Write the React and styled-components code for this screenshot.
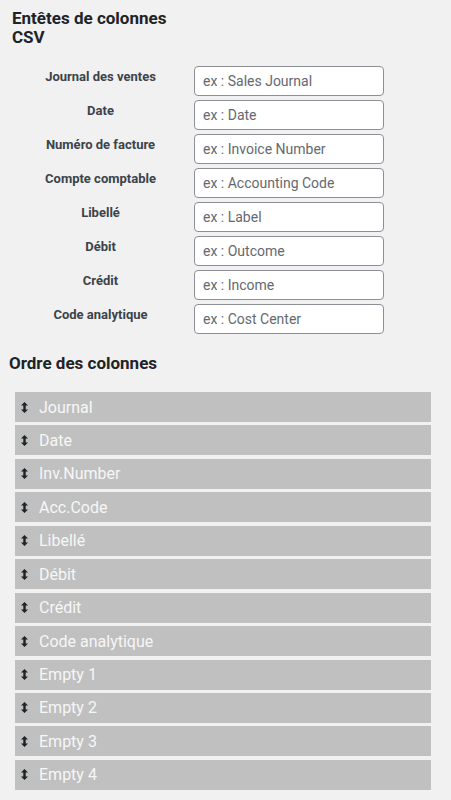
import React from "react";
import styled, { createGlobalStyle } from "styled-components";

const GlobalStyle = createGlobalStyle`
  body {
    margin: 0;
    background: #f1f1f1;
    font-family: Roboto, "Liberation Sans", sans-serif;
  }
`;

const headers = [
  ["Journal des ventes", "ex : Sales Journal"],
  ["Date", "ex : Date"],
  ["Numéro de facture", "ex : Invoice Number"],
  ["Compte comptable", "ex : Accounting Code"],
  ["Libellé", "ex : Label"],
  ["Débit", "ex : Outcome"],
  ["Crédit", "ex : Income"],
  ["Code analytique", "ex : Cost Center"],
];

const columns = [
  "Journal",
  "Date",
  "Inv.Number",
  "Acc.Code",
  "Libellé",
  "Débit",
  "Crédit",
  "Code analytique",
  "Empty 1",
  "Empty 2",
  "Empty 3",
  "Empty 4",
];

function SortIcon() {
  return (
    <Icon viewBox="0 0 7 11" width="7" height="11">
      <path d="M3.5 0 L7 3.5 H4.7 V7.5 H7 L3.5 11 L0 7.5 H2.3 V3.5 H0 Z" fill="#1d2327" />
    </Icon>
  );
}

function App() {
  return (
    <Page>
      <GlobalStyle />
      <Title>Entêtes de colonnes CSV</Title>
      <Form>
        {headers.map(([label, placeholder]) => (
          <Row key={label}>
            <Label>{label}</Label>
            <Input type="text" placeholder={placeholder} />
          </Row>
        ))}
      </Form>
      <SubTitle>Ordre des colonnes</SubTitle>
      <List>
        {columns.map((c) => (
          <Item key={c}>
            <SortIcon />
            <span>{c}</span>
          </Item>
        ))}
      </List>
    </Page>
  );
}

export default App;

const Page = styled.div`
  padding: 9px 0 10px 0;
`;

const Title = styled.h2`
  margin: 0 0 0 12px;
  max-width: 175px;
  font-size: 17px;
  line-height: 19px;
  font-weight: 700;
  color: #1d2327;
`;

const Form = styled.div`
  display: flex;
  flex-direction: column;
  gap: 4px;
  margin-top: 19px;
`;

const Row = styled.div`
  display: grid;
  grid-template-columns: 194px 190px;
  align-items: start;
`;

const Label = styled.div`
  padding: 3px 0 0 7px;
  text-align: center;
  font-size: 13px;
  line-height: 15px;
  font-weight: 700;
  color: #3c434a;
`;

const Input = styled.input`
  box-sizing: border-box;
  width: 190px;
  height: 30px;
  margin: 0;
  padding: 0 8px;
  border: 1px solid #8c8f94;
  border-radius: 4px;
  background: #fff;
  font-family: Roboto, "Liberation Sans", sans-serif;
  font-size: 14px;
  color: #2c3338;
  outline: none;
  &::placeholder {
    color: #646970;
  }
`;

const SubTitle = styled.h3`
  margin: 19px 0 0 9px;
  font-size: 17px;
  line-height: 20px;
  font-weight: 700;
  color: #1d2327;
`;

const List = styled.ul`
  list-style: none;
  margin: 19px 0 0 15px;
  padding: 0;
  width: 416px;
`;

const Item = styled.li`
  display: flex;
  align-items: center;
  gap: 11px;
  box-sizing: border-box;
  height: 30px;
  margin-bottom: 3.45px;
  padding-left: 6px;
  background: #c0c0c0;
  font-size: 16px;
  color: #f6f7f7;
`;

const Icon = styled.svg`
  flex: none;
`;
